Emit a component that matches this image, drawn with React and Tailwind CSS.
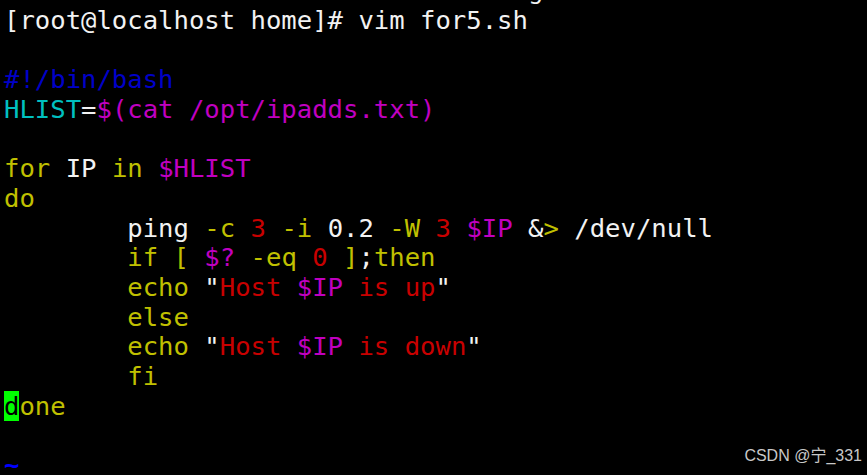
import React from 'react';

const Y = 'text-[#c0c000]';
const M = 'text-[#c000c0]';
const R = 'text-[#c80000]';
const C = 'text-[#00c0c0]';
const B = 'text-[#0000c8]';
const W = 'text-[#f2f2f2]';

// each line is a list of [text, colour] pieces
const lines = [
  [['[root@localhost home]# vim for5.sh', W]],
  [],
  [['#!/bin/bash', B]],
  [['HLIST', C], ['=', W], ['$(cat /opt/ipadds.txt)', M]],
  [],
  [['for', Y], [' IP ', W], ['in', Y], [' ', W], ['$HLIST', M]],
  [['do', Y]],
  [['        ping ', W], ['-c', Y], [' ', W], ['3', R], [' ', W], ['-i', Y], [' 0.2 ', W], ['-W', Y], [' ', W], ['3', R], [' ', W], ['$IP', M], [' &', W], ['>', Y], [' /dev/null', W]],
  [['        if [ ', Y], ['$?', M], [' -eq ', Y], ['0', R], [' ]', Y], [';', W], ['then', Y]],
  [['        echo ', Y], ['"', W], ['Host ', R], ['$IP', M], [' is up', R], ['"', W]],
  [['        else', Y]],
  [['        echo ', Y], ['"', W], ['Host ', R], ['$IP', M], [' is down', R], ['"', W]],
  [['        fi', Y]],
];

const App = () => {
  return (
    <div className="relative w-[867px] h-[475px] overflow-hidden bg-black">
      <div
        className="flex flex-col pl-[4px] -mt-[24px] text-[25.6px] leading-[29.7px] whitespace-pre"
        style={{ fontFamily: '"DejaVu Sans Mono", monospace' }}
      >
        <div className={W}>{'                                  g'}</div>
        {lines.map((parts, i) => (
          <div key={i} className="h-[29.7px]">
            {parts.map(([t, c], j) => (
              <span key={j} className={c}>{t}</span>
            ))}
          </div>
        ))}
        <div className="h-[29.7px]">
          <span className="bg-[#00ff00] text-black">d</span>
          <span className={Y}>one</span>
        </div>
        <div className="h-[29.7px]"></div>
        <div className="h-[29.7px] font-bold text-[#0000ff]">~</div>
      </div>

      <div
        className="absolute right-[5px] bottom-[7px] text-[16px] text-[#c8c8c8]"
        style={{ fontFamily: '"Liberation Sans", "Noto Sans CJK SC", sans-serif' }}
      >
        CSDN @宁_331
      </div>
    </div>
  );
};

export default App;
